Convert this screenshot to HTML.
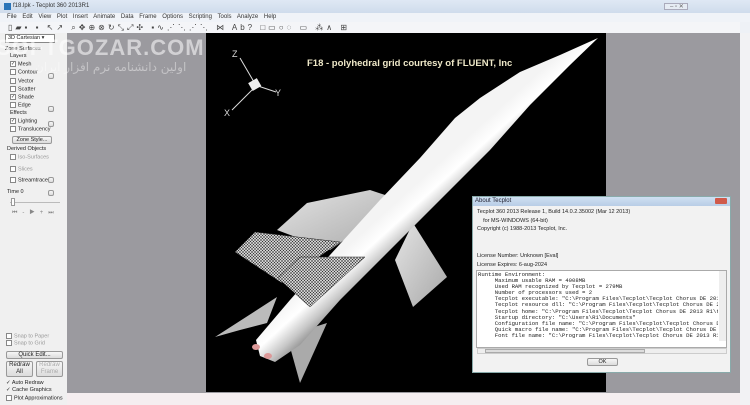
<!DOCTYPE html>
<html><head><meta charset="utf-8"><style>
*{margin:0;padding:0;box-sizing:border-box}
body{width:750px;height:405px;overflow:hidden;background:#eef1f6;font-family:"Liberation Sans",sans-serif;position:relative;font-size:6px;color:#222}
.a{position:absolute}
.cb{display:inline-block;width:6px;height:6px;border:1px solid #888;background:#fff;vertical-align:middle;margin-right:2px;font-size:5px;line-height:4px;text-align:center}
.row{position:absolute;left:10px;font-size:5.5px;white-space:nowrap}
.btn{position:absolute;border:1px solid #999;background:linear-gradient(#f6f6f6,#dcdcdc);border-radius:2px;text-align:center;font-size:6px}
.mono{font-family:"Liberation Mono",monospace;font-size:5.6px;line-height:6.1px;white-space:pre;color:#222}
</style></head><body>
<div class="a" style="left:0;top:0;width:750px;height:13px;background:linear-gradient(#dfe8f4,#cfdcec)"></div>
<div class="a" style="left:4px;top:3px;width:7px;height:7px;background:#2a74b8"></div>
<div class="a" style="left:13px;top:3px;font-size:6px;color:#333">f18.lpk - Tecplot 360 2013R1</div>
<div class="a" style="left:664px;top:3px;width:24px;height:7px;border:1px solid #aab;background:#e6ecf4"></div>
<div class="a" style="left:670px;top:3px;font-size:6px;color:#666">–  ▫  ✕</div>
<div class="a" style="left:0;top:13px;width:750px;height:9px;background:#f0f3f8"></div>
<div class="a" style="left:7px;top:14px;font-size:6px;color:#333;word-spacing:4px">File Edit View Plot Insert Animate Data Frame Options Scripting Tools Analyze Help</div>
<div class="a" style="left:0;top:22px;width:740px;height:11px;background:#f4f5f8"></div>
<div class="a" style="left:8px;top:23px;font-size:8px;color:#444;letter-spacing:3px;white-space:nowrap">▯▰▪ ▪ ↖↗ ⌕✥⊕⊗↻⤡⤢✣ ▪∿⋰⋱⋰⋱ ⋈ Ab? □▭○◌ ▭ ⁂∧ ⊞</div>
<div class="a" style="left:0;top:33px;width:67px;height:372px;background:#f0f0f0"></div>
<div class="a" style="left:5px;top:34px;width:50px;height:9px;border:1px solid #888;background:#fff;font-size:5.5px;padding-left:2px">3D Cartesian ▾</div>
<div class="row" style="left:5px;top:46px">Zone Surfaces</div>
<div class="row" style="top:53px">Layers</div>
<div class="row" style="top:61px"><span class="cb">✓</span>Mesh</div>
<div class="row" style="top:69px"><span class="cb"></span>Contour</div>
<div class="row" style="top:78px"><span class="cb"></span>Vector</div>
<div class="row" style="top:86px"><span class="cb"></span>Scatter</div>
<div class="row" style="top:94px"><span class="cb">✓</span>Shade</div>
<div class="row" style="top:102px"><span class="cb"></span>Edge</div>
<div class="row" style="top:110px">Effects</div>
<div class="row" style="top:118px"><span class="cb">✓</span>Lighting</div>
<div class="row" style="top:126px"><span class="cb"></span>Translucency</div>
<div class="btn" style="left:12px;top:136px;width:40px;height:8px;font-size:5.5px">Zone Style...</div>
<div class="row" style="left:7px;top:146px">Derived Objects</div>
<div class="row" style="top:154px;color:#999"><span class="cb"></span>Iso-Surfaces</div>
<div class="row" style="top:166px;color:#999"><span class="cb"></span>Slices</div>
<div class="row" style="top:177px"><span class="cb"></span>Streamtraces</div>
<div class="row" style="left:7px;top:189px">Time 0</div>
<div class="a" style="left:10px;top:202px;width:50px;height:1px;background:#bbb"></div>
<div class="a" style="left:11px;top:198px;width:4px;height:8px;border:1px solid #999;background:#fff"></div>
<div class="a" style="left:12px;top:210px;font-size:6px;color:#888;letter-spacing:5px">⏮-▶+⏭</div>
<div class="btn" style="left:48px;top:73px;width:6px;height:6px"></div>
<div class="btn" style="left:48px;top:106px;width:6px;height:6px"></div>
<div class="btn" style="left:48px;top:121px;width:6px;height:6px"></div>
<div class="btn" style="left:48px;top:177px;width:6px;height:6px"></div>
<div class="btn" style="left:48px;top:190px;width:6px;height:6px"></div>
<div class="row" style="left:6px;top:333px;color:#999"><span class="cb"></span>Snap to Paper</div>
<div class="row" style="left:6px;top:340px;color:#999"><span class="cb"></span>Snap to Grid</div>
<div class="btn" style="left:6px;top:351px;width:57px;height:8px">Quick Edit...</div>
<div class="btn" style="left:6px;top:361px;width:27px;height:16px;line-height:7px">Redraw<br>All</div>
<div class="btn" style="left:36px;top:361px;width:27px;height:16px;line-height:7px;color:#aaa">Redraw<br>Frame</div>
<div class="row" style="left:6px;top:380px">✓ Auto Redraw</div>
<div class="row" style="left:6px;top:387px">✓ Cache Graphics</div>
<div class="row" style="left:6px;top:395px"><span class="cb"></span>Plot Approximations</div>
<div class="a" style="left:67px;top:33px;width:673px;height:360px;background:#9b9a9f"></div>
<div class="a" style="left:740px;top:33px;width:10px;height:372px;background:#f2f2f4"></div>
<div class="a" style="left:67px;top:393px;width:673px;height:12px;background:#f5eef0"></div>
<div class="a" style="left:206px;top:33px;width:400px;height:359px;background:#000"></div>
<svg class="a" style="left:0;top:0" width="750" height="405" viewBox="0 0 750 405">
<defs>
<linearGradient id="g" gradientUnits="userSpaceOnUse" x1="415" y1="185" x2="445" y2="218"><stop offset="0" stop-color="#f4f4f4"/><stop offset=".35" stop-color="#ffffff"/><stop offset=".7" stop-color="#c8c8c8"/><stop offset="1" stop-color="#8a8a8a"/></linearGradient>
<linearGradient id="w" x1="0" y1="0" x2="1" y2="1"><stop offset="0" stop-color="#e4e4e4"/><stop offset="1" stop-color="#a8a8a8"/></linearGradient>
<pattern id="m" width="3" height="3" patternUnits="userSpaceOnUse"><rect width="3" height="3" fill="#d0d0d0"/><path d="M0 0L3 3M3 0L0 3" stroke="#333" stroke-width=".5"/></pattern>
</defs>
<g stroke="#ddd" stroke-width="1"><line x1="240" y1="58" x2="254" y2="82"/><line x1="258" y1="86" x2="276" y2="92"/><line x1="252" y1="90" x2="232" y2="110"/></g>
<rect x="250" y="80" width="10" height="9" fill="#eee" transform="rotate(-30 255 85)"/>
<g fill="#ddd" font-size="9" font-family="Liberation Sans"><text x="232" y="57">Z</text><text x="275" y="96">Y</text><text x="224" y="116">X</text></g>
<text x="307" y="66" fill="#eee8c8" font-size="9.5" font-weight="bold" font-family="Liberation Sans">F18 - polyhedral grid courtesy of FLUENT, Inc</text>
<polygon points="277,230 307,203 370,190 400,200 330,250" fill="url(#w)"/>
<polygon points="413,223 447,277 413,307 395,260" fill="url(#w)"/>
<polygon points="215,337 277,297 267,323 240,330" fill="#bbb"/>
<polygon points="290,347 300,383 327,323 305,330" fill="#aaa"/>
<polygon points="598,38 560,55 520,72 480,98 455,118 420,158 380,200 330,255 290,300 256,340 260,356 275,362 300,345 340,300 400,240 450,190 490,150 530,105 570,65" fill="url(#g)"/>
<polygon points="235,252 255,232 340,242 282,283" fill="url(#m)" stroke="#222" stroke-width=".5"/>
<polygon points="278,278 300,257 365,257 310,307" fill="url(#m)" stroke="#222" stroke-width=".5"/>
<ellipse cx="256" cy="347" rx="4" ry="3" fill="#d99"/><ellipse cx="268" cy="356" rx="4" ry="3" fill="#d99"/>
</svg>
<div class="a" style="left:-4px;top:35px;font-size:22px;font-weight:bold;color:rgba(255,255,255,.55);letter-spacing:1px">SOFTGOZAR.COM</div>
<div class="a" style="left:35px;top:60px;font-size:12px;color:rgba(255,255,255,.4);font-family:'DejaVu Sans',sans-serif">اولین دانشنامه نرم افزار ایران</div>
<div class="a" style="left:472px;top:196px;width:259px;height:177px;background:#f2f2f2;border:1px solid #8aa"></div>
<div class="a" style="left:473px;top:197px;width:257px;height:9px;background:linear-gradient(#cfe0f2,#b8cde6)"></div>
<div class="a" style="left:475px;top:198px;font-size:6px;color:#223">About Tecplot</div>
<div class="a" style="left:715px;top:198px;width:12px;height:6px;background:#d05a4a;border-radius:1px"></div>
<div class="a" style="left:477px;top:208px;font-size:5.5px;line-height:8.5px;white-space:nowrap">Tecplot 360 2013 Release 1, Build 14.0.2.35002 (Mar 12 2013)<br>&nbsp;&nbsp;&nbsp;&nbsp;for MS-WINDOWS (64-bit)<br>Copyright (c) 1988-2013 Tecplot, Inc.</div>
<div class="a" style="left:477px;top:252px;font-size:5.5px;line-height:8.5px;white-space:nowrap">License Number: Unknown [Eval]<br>License Expires: 6-aug-2024</div>
<div class="a" style="left:476px;top:270px;width:251px;height:78px;background:#fff;border:1px solid #aaa;overflow:hidden"></div>
<div class="a mono" style="left:478px;top:272px;width:240px;height:76px;overflow:hidden">Runtime Environment:
     Maximum usable RAM = 4008MB
     Used RAM recognized by Tecplot = 279MB
     Number of processors used = 2
     Tecplot executable: "C:\Program Files\Tecplot\Tecplot Chorus DE 2013 R1\tec
     Tecplot resource dll: "C:\Program Files\Tecplot\Tecplot Chorus DE 2013 R1\r
     Tecplot home: "C:\Program Files\Tecplot\Tecplot Chorus DE 2013 R1\tecplot36
     Startup directory: "C:\Users\R1\Documents"
     Configuration file name: "C:\Program Files\Tecplot\Tecplot Chorus DE 2013 R
     Quick macro file name: "C:\Program Files\Tecplot\Tecplot Chorus DE 2013 R1\
     Font file name: "C:\Program Files\Tecplot\Tecplot Chorus DE 2013 R1\tecplot</div>
<div class="a" style="left:719px;top:271px;width:7px;height:70px;background:#eee"></div>
<div class="a" style="left:477px;top:348px;width:250px;height:6px;background:#eee;border:1px solid #ccc"></div>
<div class="a" style="left:485px;top:349px;width:160px;height:4px;background:#ddd;border:1px solid #aaa"></div>
<div class="btn" style="left:587px;top:358px;width:31px;height:8px;font-size:5.5px">OK</div>
</body></html>
